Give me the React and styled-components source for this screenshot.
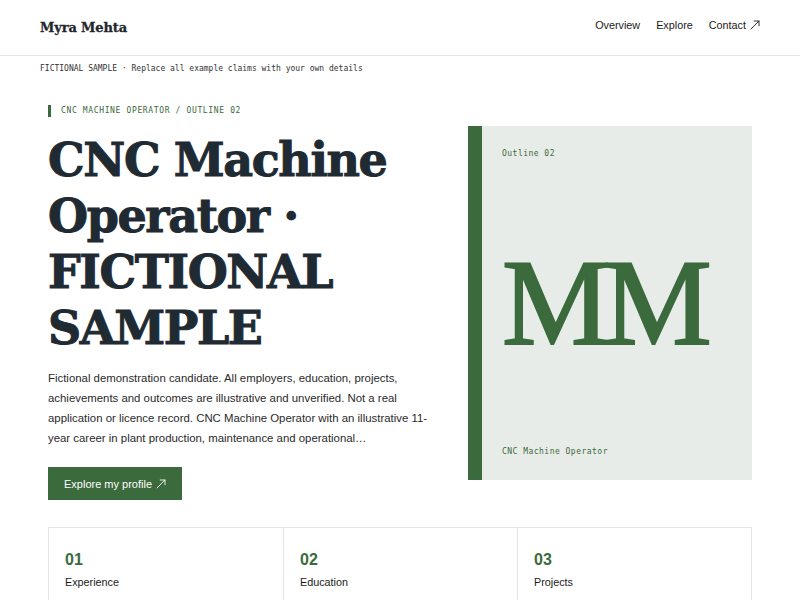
import React from "react";
import styled, { createGlobalStyle } from "styled-components";

const green = "#3b6a3c";

const GlobalStyle = createGlobalStyle`
    html, body {
        margin: 0;
        padding: 0;
        background: #ffffff;
    }
    body {
        font-family: "Liberation Sans", Arial, sans-serif;
        color: #222;
    }
    * {
        box-sizing: border-box;
    }
`;

const Page = styled.div`
    width: 100%;
    min-height: 100vh;
    background: #ffffff;
`;

const Header = styled.header`
    height: 56px;
    padding: 0 40px;
    border-bottom: 1px solid #e4e4e4;
    display: flex;
    align-items: center;
    justify-content: space-between;
`;

const Logo = styled.div`
    font-family: "DejaVu Serif", Georgia, serif;
    font-weight: 700;
    font-size: 13px;
    letter-spacing: -0.01em;
    color: #1f262d;
    -webkit-text-stroke: 0.3px #1f262d;
`;

const Nav = styled.nav`
    display: flex;
    align-items: center;
    gap: 16px;
    margin-bottom: 5px;
`;

const NavLink = styled.a`
    display: inline-flex;
    align-items: center;
    gap: 4px;
    font-size: 10.8px;
    color: #1a1a1a;
    text-decoration: none;
    cursor: pointer;
`;

const Banner = styled.div`
    padding: 7px 40px 0;
    font-family: "DejaVu Sans Mono", "Liberation Mono", monospace;
    font-size: 8px;
    line-height: 12px;
    color: #333;
`;

const Main = styled.main`
    padding: 0 48px;
`;

const Hero = styled.section`
    display: grid;
    grid-template-columns: 380px 284px;
    column-gap: 40px;
    align-items: center;
    padding-top: 30px;
`;

const HeroText = styled.div`
    display: flex;
    flex-direction: column;
    align-items: flex-start;
`;

const Eyebrow = styled.div`
    border-left: 3px solid ${green};
    padding-left: 10px;
    font-family: "DejaVu Sans Mono", "Liberation Mono", monospace;
    font-size: 8px;
    line-height: 12px;
    letter-spacing: 0.08em;
    color: ${green};
    text-transform: uppercase;
`;

const Title = styled.h1`
    margin: 15px 0 0;
    font-family: "DejaVu Serif", Georgia, serif;
    font-weight: 700;
    font-size: 46px;
    line-height: 56px;
    letter-spacing: -0.03em;
    color: #1f2a33;
    -webkit-text-stroke: 1px #1f2a33;
`;

const Lead = styled.p`
    margin: 12px 0 0;
    font-size: 11.4px;
    line-height: 20px;
    color: #2a2a2a;
`;

const PrimaryButton = styled.button`
    margin-top: 19px;
    height: 33px;
    padding: 0 16px;
    border: none;
    background: ${green};
    color: #ffffff;
    font-family: "Liberation Sans", Arial, sans-serif;
    font-size: 11px;
    display: inline-flex;
    align-items: center;
    gap: 4px;
    cursor: pointer;
`;

const Cover = styled.aside`
    height: 354px;
    background: #e8ece9;
    border-left: 14px solid ${green};
    padding: 22px 20px;
    display: flex;
    flex-direction: column;
    justify-content: space-between;
`;

const CoverLabel = styled.div`
    font-family: "DejaVu Sans Mono", "Liberation Mono", monospace;
    font-size: 8px;
    line-height: 12px;
    letter-spacing: 0.06em;
    color: ${green};
`;

const Monogram = styled.div`
    font-family: "Liberation Serif", "Times New Roman", serif;
    font-size: 122px;
    line-height: 1;
    letter-spacing: -0.06em;
    color: ${green};
    -webkit-text-stroke: 2px ${green};
`;

const Sections = styled.section`
    margin-top: 27px;
    display: grid;
    grid-template-columns: repeat(3, 1fr);
    border: 1px solid #e4e4e4;
    border-bottom: none;
`;

const SectionCard = styled.div`
    padding: 22px 16px 20px;
    border-left: ${({ first }) => (first ? "none" : "1px solid #e4e4e4")};
`;

const SectionNumber = styled.div`
    font-size: 16px;
    line-height: 20px;
    font-weight: 700;
    color: ${green};
`;

const SectionName = styled.div`
    margin-top: 4px;
    font-size: 10.8px;
    line-height: 16px;
    color: #1a1a1a;
`;

const Arrow = ({ size = 10, color = "currentColor" }) => (
    <svg width={size} height={size} viewBox="0 0 10 10" fill="none" stroke={color} strokeWidth="0.9" strokeLinecap="round">
        <path d="M1 9 L9 1" />
        <path d="M4.2 1 H9 V5.8" />
    </svg>
);

const sections = [
    { num: "01", name: "Experience" },
    { num: "02", name: "Education" },
    { num: "03", name: "Projects" },
];

export default function App() {
    return (
        <Page>
            <GlobalStyle />
            <Header>
                <Logo>Myra Mehta</Logo>
                <Nav>
                    <NavLink>Overview</NavLink>
                    <NavLink>Explore</NavLink>
                    <NavLink>
                        Contact <Arrow size={10} />
                    </NavLink>
                </Nav>
            </Header>

            <Banner>FICTIONAL SAMPLE · Replace all example claims with your own details</Banner>

            <Main>
                <Hero>
                    <HeroText>
                        <Eyebrow>CNC Machine Operator / Outline 02</Eyebrow>
                        <Title>CNC Machine Operator · FICTIONAL SAMPLE</Title>
                        <Lead>
                            Fictional demonstration candidate. All employers, education, projects,
                            achievements and outcomes are illustrative and unverified. Not a real
                            application or licence record. CNC Machine Operator with an illustrative
                            11-year career in plant production, maintenance and operational…
                        </Lead>
                        <PrimaryButton>
                            Explore my profile <Arrow size={10} />
                        </PrimaryButton>
                    </HeroText>

                    <Cover>
                        <CoverLabel>Outline 02</CoverLabel>
                        <Monogram>MM</Monogram>
                        <CoverLabel>CNC Machine Operator</CoverLabel>
                    </Cover>
                </Hero>

                <Sections>
                    {sections.map((s, i) => (
                        <SectionCard key={s.num} first={i === 0}>
                            <SectionNumber>{s.num}</SectionNumber>
                            <SectionName>{s.name}</SectionName>
                        </SectionCard>
                    ))}
                </Sections>
            </Main>
        </Page>
    );
}
